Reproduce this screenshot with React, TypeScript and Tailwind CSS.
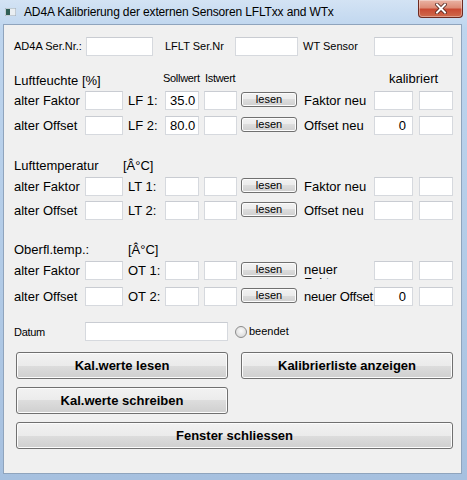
import React from "react";

const inputBase =
  "h-[19px] shrink-0 border border-[#d6d9de] border-t-[#c9ccd2] bg-white text-[13px] text-black outline-none font-['Liberation_Sans',Arial,sans-serif]";

function TB({ w, value, right }: { w: string; value?: string; right?: boolean }) {
  return (
    <input
      type="text"
      readOnly
      defaultValue={value ?? ""}
      className={`${inputBase} ${w} ${right ? "text-right pr-[6px]" : "pl-[4px]"}`}
    />
  );
}

function Lesen() {
  return (
    <button className="mt-[1px] h-[15px] w-[56px] shrink-0 self-start rounded-[3px] border border-[#707070] bg-[linear-gradient(to_bottom,#f2f2f2_0%,#ebebeb_50%,#dddddd_50%,#cfcfcf_100%)] shadow-[inset_0_0_0_1px_#fcfcfc] text-[11px] leading-[13px] text-black">
      lesen
    </button>
  );
}

function BigButton({ w, children }: { w: string; children: React.ReactNode }) {
  return (
    <button
      className={`h-[27px] ${w} shrink-0 rounded-[3px] border border-[#707070] bg-[linear-gradient(to_bottom,#f2f2f2_0%,#ebebeb_50%,#dddddd_50%,#cfcfcf_100%)] shadow-[inset_0_0_0_1px_#fcfcfc] text-[13px] font-bold text-black`}
    >
      {children}
    </button>
  );
}

type RowProps = {
  mt: string;
  label: string;
  ch: string;
  soll?: string;
  right: React.ReactNode;
  kal?: string;
};

function SensorRow({ mt, label, ch, soll, right, kal }: RowProps) {
  return (
    <div className={`${mt} flex h-[19px] items-center text-[13px] leading-[15px]`}>
      <div className="w-[71px] shrink-0">{label}</div>
      <TB w="w-[38px]" />
      <div className="w-[42px] shrink-0 pl-[5px]">{ch}</div>
      <TB w="w-[34px]" value={soll} />
      <div className="ml-[5px] flex">
        <TB w="w-[33px]" />
      </div>
      <div className="ml-[4px] flex h-[19px]">
        <Lesen />
      </div>
      <div className="flex h-[19px] w-[77px] shrink-0 items-center pl-[7px]">{right}</div>
      <TB w="w-[39px]" value={kal} right={kal !== undefined} />
      <div className="ml-[6px] flex">
        <TB w="w-[34px]" />
      </div>
    </div>
  );
}

export default function App() {
  return (
    <div className="relative h-[480px] w-[467px] overflow-hidden bg-[linear-gradient(to_bottom,#d3e3f4_0%,#bed5ee_6%,#b1cae6_60%,#a6c0df_100%)] font-['Liberation_Sans',Arial,sans-serif] text-black">
      {/* Title bar */}
      <div className="flex h-[24px] items-start">
        <svg className="ml-[5px] mt-[8px] shrink-0" width="11" height="8" viewBox="0 0 11 8">
          <rect x="0" y="0" width="11" height="8" fill="#e9eef2" stroke="#9aa7b2" strokeWidth="1" />
          <rect x="1" y="1" width="4" height="6" fill="#2f5e55" />
        </svg>
        <div className="ml-[8px] mt-[5px] whitespace-nowrap text-[12px] leading-[14px] tracking-[-0.14px] text-black">
          AD4A Kalibrierung der externen Sensoren LFLTxx and WTx
        </div>
        <div className="ml-auto mr-[4px] flex h-[18px] w-[45px] shrink-0 items-center justify-center rounded-b-[4px] border border-t-0 border-[#6e2a20] bg-[linear-gradient(to_bottom,#eab3a4_0%,#dd8c77_45%,#c94a33_55%,#cf6a4c_100%)] shadow-[inset_0_0_0_1px_rgba(255,255,255,0.35)]">
          <svg width="12" height="11" viewBox="0 0 12 11">
            <path d="M2 1.5 L10 9.5 M10 1.5 L2 9.5" stroke="#4a1d16" strokeWidth="3.6" strokeLinecap="square" />
            <path d="M2 1.5 L10 9.5 M10 1.5 L2 9.5" stroke="#ffffff" strokeWidth="2" strokeLinecap="square" />
          </svg>
        </div>
      </div>

      {/* Client area */}
      <div className="ml-[3px] h-[450px] w-[459px] border border-[#8fa4bd] bg-[#f0f0f0] pl-[10px]">
        {/* Row A */}
        <div className="mt-[12px] flex h-[19px] items-center text-[11px] leading-[13px]">
          <div className="w-[72px] shrink-0">AD4A Ser.Nr.:</div>
          <TB w="w-[67px]" />
          <div className="w-[82px] shrink-0 pl-[12px]">LFLT Ser.Nr</div>
          <TB w="w-[63px]" />
          <div className="w-[76px] shrink-0 pl-[5px]">WT Sensor</div>
          <TB w="w-[79px]" />
        </div>

        {/* Section 1 header */}
        <div className="mt-[15px] flex h-[17px] items-start">
          <div className="mt-[2px] w-[149px] shrink-0 text-[13px] leading-[15px]">Luftfeuchte [%]</div>
          <div className="mt-[1px] w-[42px] shrink-0 text-[11px] leading-[12px] tracking-[-0.3px]">Sollwert</div>
          <div className="mt-[1px] w-[184px] shrink-0 text-[11px] leading-[12px] tracking-[-0.3px]">Istwert</div>
          <div className="text-[13px] leading-[15px]">kalibriert</div>
        </div>
        <SensorRow mt="mt-[3px]" label="alter Faktor" ch="LF 1:" soll="35.0" right="Faktor neu" />
        <SensorRow mt="mt-[6px]" label="alter Offset" ch="LF 2:" soll="80.0" right="Offset neu" kal="0" />

        {/* Section 2 header */}
        <div className="mt-[21px] flex h-[17px] items-start text-[13px] leading-[15px]">
          <div className="mt-[2px] w-[109px] shrink-0">Lufttemperatur</div>
          <div className="mt-[2px]">[Â°C]</div>
        </div>
        <SensorRow mt="mt-[4px]" label="alter Faktor" ch="LT 1:" right="Faktor neu" />
        <SensorRow mt="mt-[5px]" label="alter Offset" ch="LT 2:" right="Offset neu" />

        {/* Section 3 header */}
        <div className="mt-[20px] flex h-[17px] items-start text-[13px] leading-[15px]">
          <div className="mt-[2px] w-[114px] shrink-0">Oberfl.temp.:</div>
          <div className="mt-[2px]">[Â°C]</div>
        </div>
        <SensorRow
          mt="mt-[4px]"
          label="alter Faktor"
          ch="OT 1:"
          right={
            <div className="mt-[2px] h-[16px] w-[66px] self-start overflow-hidden leading-[13px]">neuer Faktor</div>
          }
        />
        <SensorRow
          mt="mt-[7px]"
          label="alter Offset"
          ch="OT 2:"
          right={<span className="-ml-[0px] whitespace-nowrap tracking-[-0.2px]">neuer Offset</span>}
          kal="0"
        />

        {/* Datum row */}
        <div className="mt-[16px] flex h-[19px] items-center">
          <div className="w-[71px] shrink-0 text-[11px] leading-[12px] tracking-[-0.3px]">Datum</div>
          <TB w="w-[143px]" />
          <div className="ml-[7px] h-[12px] w-[12px] shrink-0 rounded-full border border-[#8c8c8c] bg-[radial-gradient(circle_at_50%_40%,#fbfbfb_0%,#e4e4e4_55%,#cfcfcf_100%)]" />
          <div className="ml-[2px] text-[11px] leading-[13px]">beendet</div>
        </div>

        {/* Buttons */}
        <div className="ml-[2px] mt-[11px] flex gap-[13px]">
          <BigButton w="w-[212px]">Kal.werte lesen</BigButton>
          <BigButton w="w-[212px]">Kalibrierliste anzeigen</BigButton>
        </div>
        <div className="ml-[2px] mt-[8px] flex">
          <BigButton w="w-[212px]">Kal.werte schreiben</BigButton>
        </div>
        <div className="ml-[2px] mt-[8px] flex">
          <BigButton w="w-[437px]">Fenster schliessen</BigButton>
        </div>
      </div>
    </div>
  );
}
